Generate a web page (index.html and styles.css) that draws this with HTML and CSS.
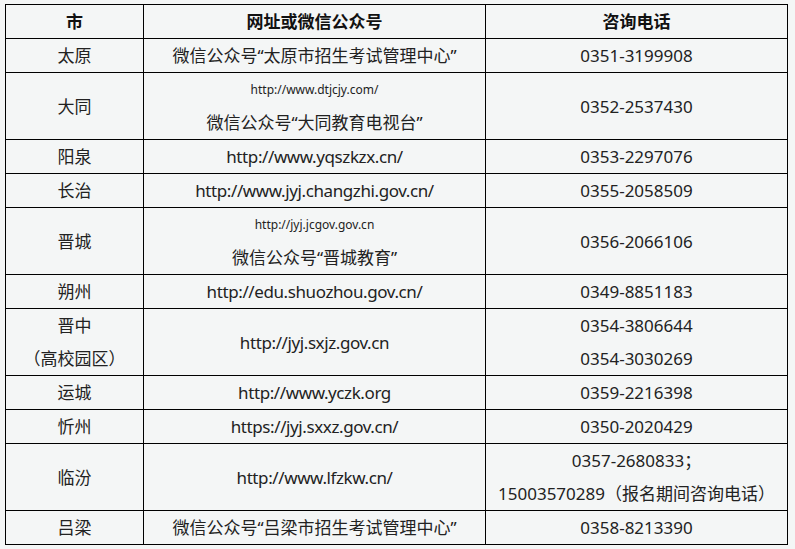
FILE: index.html
```html
<!DOCTYPE html>
<html lang="zh">
<head>
<meta charset="utf-8">
<link rel="stylesheet" href="styles.css">
</head>
<body>
<table class="info">
  <colgroup>
    <col class="c1"><col class="c2"><col class="c3">
  </colgroup>
  <thead>
    <tr><th>市</th><th>网址或微信公众号</th><th>咨询电话</th></tr>
  </thead>
  <tbody>
    <tr><td>太原</td><td>微信公众号“太原市招生考试管理中心”</td><td>0351-3199908</td></tr>
    <tr class="tall"><td>大同</td><td><div class="small">http://www.dtjcjy.com/</div><div>微信公众号“大同教育电视台”</div></td><td>0352-2537430</td></tr>
    <tr><td>阳泉</td><td class="url">http://www.yqszkzx.cn/</td><td>0353-2297076</td></tr>
    <tr><td>长治</td><td class="url">http://www.jyj.changzhi.gov.cn/</td><td>0355-2058509</td></tr>
    <tr class="tall"><td>晋城</td><td><div class="small">http://jyj.jcgov.gov.cn</div><div>微信公众号“晋城教育”</div></td><td>0356-2066106</td></tr>
    <tr><td>朔州</td><td class="url">http://edu.shuozhou.gov.cn/</td><td>0349-8851183</td></tr>
    <tr class="tall"><td><div>晋中</div><div>（高校园区）</div></td><td class="url">http://jyj.sxjz.gov.cn</td><td><div>0354-3806644</div><div>0354-3030269</div></td></tr>
    <tr><td>运城</td><td class="url">http://www.yczk.org</td><td>0359-2216398</td></tr>
    <tr><td>忻州</td><td class="url">https://jyj.sxxz.gov.cn/</td><td>0350-2020429</td></tr>
    <tr class="tall"><td>临汾</td><td class="url">http://www.lfzkw.cn/</td><td><div>0357-2680833；</div><div>15003570289（报名期间咨询电话）</div></td></tr>
    <tr><td>吕梁</td><td>微信公众号“吕梁市招生考试管理中心”</td><td>0358-8213390</td></tr>
  </tbody>
</table>
</body>
</html>
```
FILE: styles.css
```css
html, body {
  margin: 0;
  background: #f4f6f6;
}
body {
  padding: 4px 0 0 5px;
  font-family: "Noto Sans", "Noto Sans CJK SC", sans-serif;
  font-size: 17px;
  color: #222;
}
.info {
  border-collapse: collapse;
  width: 782px;
  table-layout: fixed;
}
.c1 { width: 138px; }
.c2 { width: 342px; }
.c3 { width: 302px; }
.info th, .info td {
  border: 1px solid #000;
  padding: 0;
  text-align: center;
  vertical-align: middle;
  line-height: 33px;
  height: 33px;
  white-space: nowrap;
}
.info th {
  font-weight: bold;
  color: #111;
}
.info tr.tall td { height: 66px; }
.info td.url {
  letter-spacing: -0.4px;
}
.small {
  font-size: 12px;
}
```
